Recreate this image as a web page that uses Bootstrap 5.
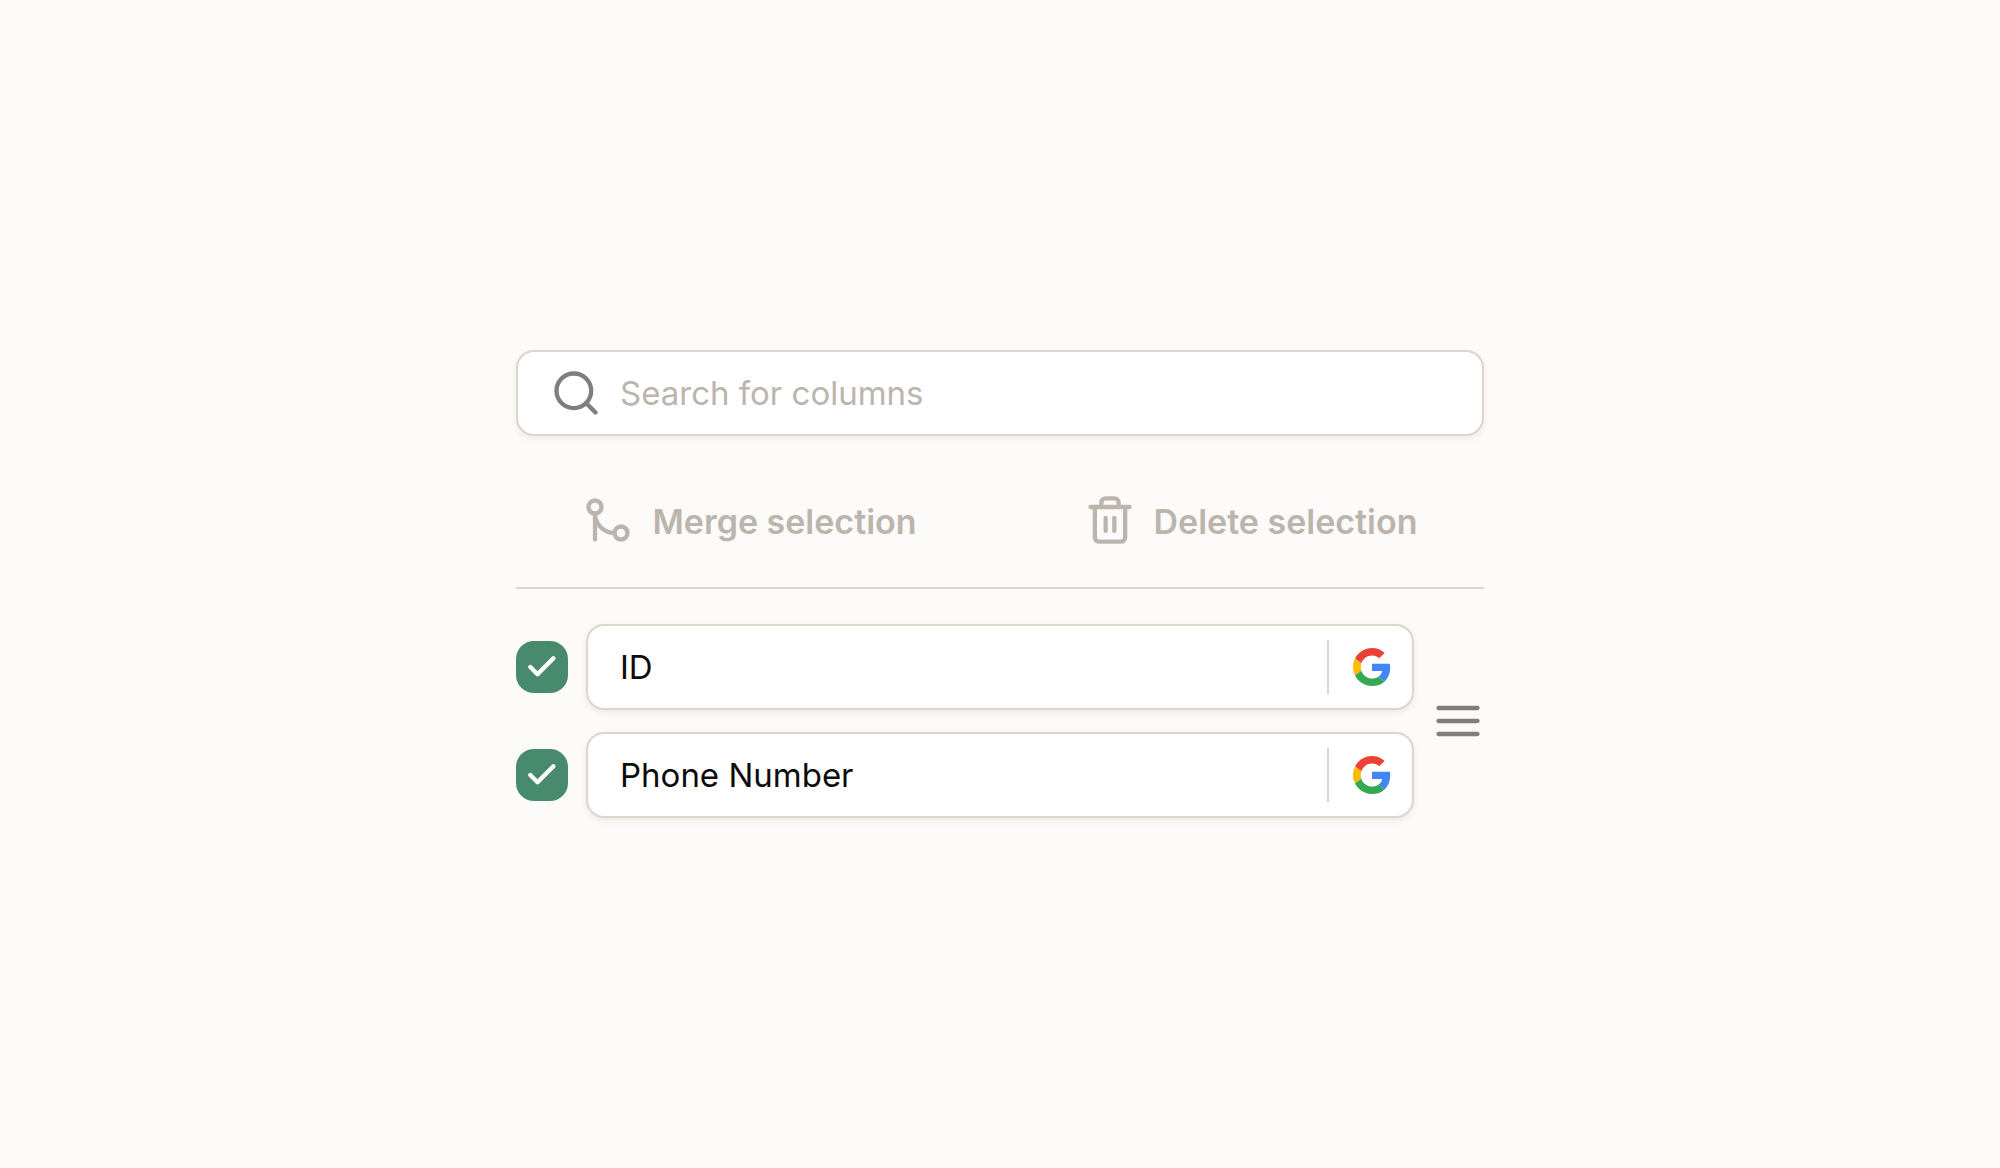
<!DOCTYPE html>
<html lang="en">
<head>
<meta charset="utf-8">
<meta name="viewport" content="width=device-width, initial-scale=1">
<title>Columns</title>
<link rel="stylesheet" href="https://cdn.jsdelivr.net/npm/bootstrap@5.3.0/dist/css/bootstrap.min.css">
<style>
  body { background: #fdfbf9; color: #0c0c0b; font-family: Inter, sans-serif; font-size: 33px; line-height: 44px; }
  .column-picker { max-width: 968px; }
  .field-box { min-height: 86px; background: #fff; border: 2px solid #ddd6cc; border-radius: 18px; box-shadow: 0 3px 6px rgba(80, 60, 40, .09); }
  .search-box { padding: 0 32px; gap: 18px; margin-bottom: 58px; color: #7f7e7b; }
  .search-box input { font-size: 33px; line-height: 44px; }
  .search-box input::placeholder { color: #bbb5ad; opacity: 1; }
  .search-box input:focus { box-shadow: none; }
  .search-box:focus-within { border-color: #488a6d; }
  .glyph { width: 52px; height: 52px; flex: none; fill: none; stroke: currentColor; stroke-width: 2; stroke-linecap: round; stroke-linejoin: round; }
  .action-bar { gap: 34px; padding-bottom: 41px; border-bottom: 2px solid #ddd6cc; margin-bottom: 35px; }
  .action-btn { gap: 18px; color: #bbb5ad; font-size: 34px; line-height: 44px; font-weight: 600; }
  .action-btn span { padding-top: 4px; }
  .action-btn:hover { color: #7f7e7b; }
  .spaced { gap: 18px; }
  .column-list { gap: 22px; }
  .tick.form-check-input { width: 52px; height: 52px; border: 0; border-radius: 18px; background-color: #e6e1da; background-size: 100% 100%; }
  .tick.form-check-input:checked { background-color: #488a6d; background-image: url("data:image/svg+xml,%3csvg xmlns='http://www.w3.org/2000/svg' viewBox='0 0 52 52'%3e%3cpath d='M37.4 17.3 21.5 33.2 14.3 26' fill='none' stroke='%23fff' stroke-width='4.4' stroke-linecap='round' stroke-linejoin='round'/%3e%3c/svg%3e"); }
  .name-box { padding: 0 21px 0 32px; }
  .source-btn { height: 54px; padding-left: 24px; border-left: 2px solid #ddd6cc !important; }
  .source-btn svg { width: 38px; height: 38px; }
  .drag-btn { color: #7f7e7b; }
</style>
</head>
<body>
<main class="min-vh-100 d-flex align-items-center justify-content-center">
  <div class="column-picker w-100">
    <div class="field-box search-box d-flex align-items-center">
      <svg class="glyph" viewBox="0 0 24 24" aria-hidden="true"><circle cx="11" cy="11" r="8"/><path d="m21 21-4.350-4.350"/></svg>
      <input class="form-control border-0 p-0 bg-transparent" type="search" placeholder="Search for columns" aria-label="Search for columns">
    </div>

    <div class="action-bar d-flex">
      <button type="button" class="action-btn btn border-0 p-0 d-flex flex-fill w-50 align-items-center justify-content-center">
        <svg class="glyph" viewBox="0 0 24 24" aria-hidden="true"><circle cx="18" cy="18" r="3"/><circle cx="6" cy="6" r="3"/><path d="M6 21V9a9 9 0 0 0 9 9"/></svg>
        <span>Merge selection</span>
      </button>
      <button type="button" class="action-btn btn border-0 p-0 d-flex flex-fill w-50 align-items-center justify-content-center">
        <svg class="glyph" viewBox="0 0 24 24" aria-hidden="true"><path d="M3 6h18M19 6v14a2 2 0 0 1-2 2H7a2 2 0 0 1-2-2V6m3 0V4a2 2 0 0 1 2-2h4a2 2 0 0 1 2 2v2M10 11v6M14 11v6"/></svg>
        <span>Delete selection</span>
      </button>
    </div>

    <div class="spaced d-flex align-items-center">
      <div class="column-list d-flex flex-column flex-grow-1">
        <div class="spaced d-flex align-items-center">
          <input class="tick form-check-input m-0 flex-shrink-0" type="checkbox" id="col-id" checked>
          <div class="field-box name-box d-flex align-items-center flex-grow-1">
            <label class="flex-grow-1" for="col-id">ID</label>
            <button type="button" class="source-btn btn border-0 rounded-0 py-0 pe-0 d-flex align-items-center" aria-label="Google source">
              <svg viewBox="0 0 48 48" aria-hidden="true"><use href="#google-g"/></svg>
            </button>
          </div>
        </div>
        <div class="spaced d-flex align-items-center">
          <input class="tick form-check-input m-0 flex-shrink-0" type="checkbox" id="col-phone" checked>
          <div class="field-box name-box d-flex align-items-center flex-grow-1">
            <label class="flex-grow-1" for="col-phone">Phone Number</label>
            <button type="button" class="source-btn btn border-0 rounded-0 py-0 pe-0 d-flex align-items-center" aria-label="Google source">
              <svg viewBox="0 0 48 48" aria-hidden="true"><use href="#google-g"/></svg>
            </button>
          </div>
        </div>
      </div>
      <button type="button" class="drag-btn btn border-0 p-0 d-flex" aria-label="Reorder">
        <svg class="glyph" viewBox="0 0 24 24" aria-hidden="true"><path d="M3 6h18M3 12h18M3 18h18"/></svg>
      </button>
    </div>
  </div>
</main>
<svg class="d-none" aria-hidden="true">
  <symbol id="google-g" viewBox="0 0 48 48">
    <path fill="#EA4335" d="M24 9.500c3.540 0 6.710 1.220 9.210 3.600l6.850-6.850C35.900 2.380 30.470 0 24 0 14.620 0 6.510 5.380 2.560 13.220l7.980 6.190C12.430 13.720 17.740 9.500 24 9.500z"/>
    <path fill="#4285F4" d="M46.980 24.550c0-1.570-.15-3.090-.38-4.550H24v9.020h12.940c-.58 2.960-2.260 5.480-4.780 7.180l7.730 6c4.510-4.180 7.090-10.360 7.090-17.650z"/>
    <path fill="#FBBC05" d="M10.530 28.590c-.48-1.450-.76-2.990-.76-4.590s.27-3.140.76-4.590l-7.980-6.190C.92 16.460 0 20.120 0 24c0 3.880.92 7.540 2.560 10.780l7.970-6.190z"/>
    <path fill="#34A853" d="M24 48c6.480 0 11.930-2.130 15.890-5.810l-7.730-6c-2.150 1.450-4.920 2.300-8.160 2.300-6.260 0-11.570-4.220-13.470-9.910l-7.980 6.190C6.510 42.620 14.620 48 24 48z"/>
  </symbol>
</svg>
<script src="https://cdn.jsdelivr.net/npm/bootstrap@5.3.0/dist/js/bootstrap.bundle.min.js"></script>
</body>
</html>
